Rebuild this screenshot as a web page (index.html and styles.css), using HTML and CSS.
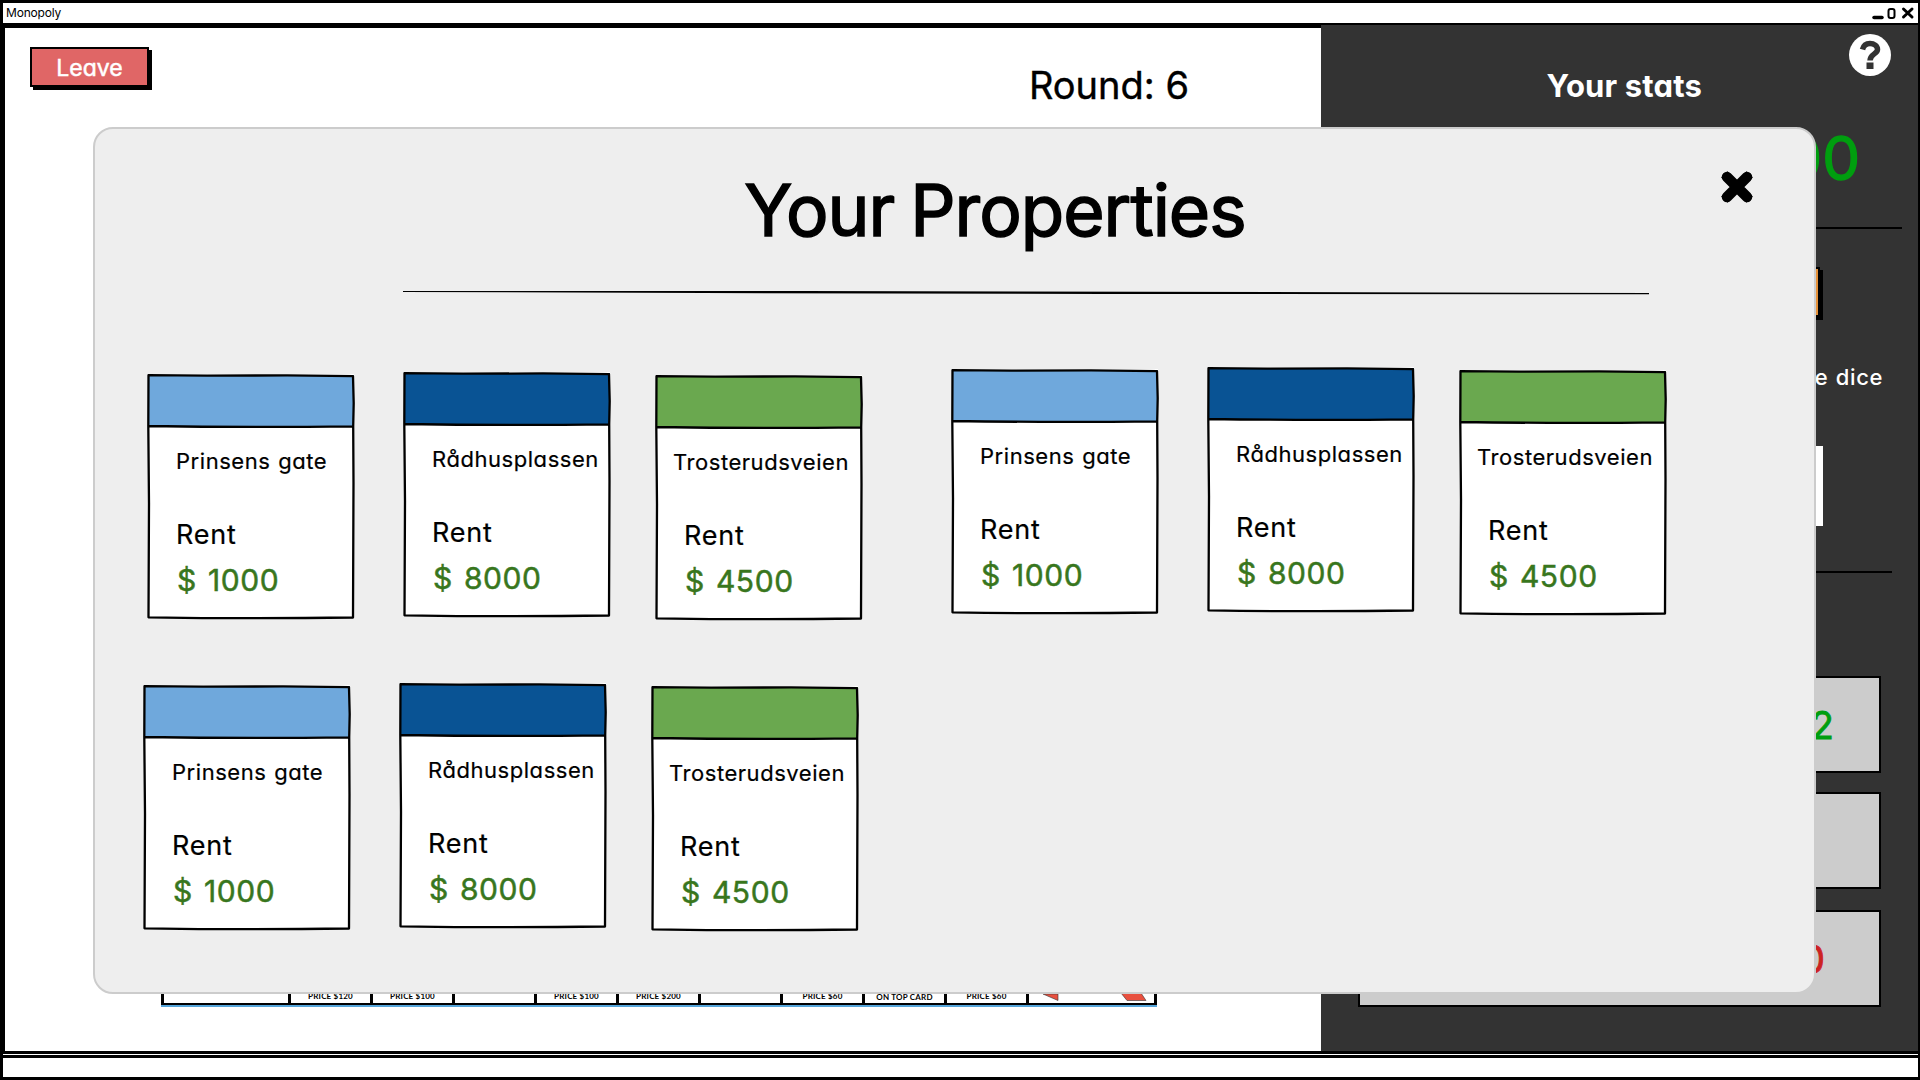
FILE: index.html
```html
<!DOCTYPE html>
<html lang="en">
<head>
<meta charset="utf-8">
<title>Monopoly</title>
<link rel="stylesheet" href="styles.css">
</head>
<body>
<svg class="defs" aria-hidden="true">
  <symbol id="frame" viewBox="0 0 208 248">
    <path d="M1.500 2.200 L60 2.700 L140 2.400 L206 3.200 L206.700 30 L206.200 53 L206.500 110 L206 244.500 Q104 246 1.500 244.300 L2 130 L1.300 53 Z M1.300 53 Q104 54.600 206.300 53.300" fill="none" stroke="#000" stroke-width="2.300" stroke-linejoin="round"/>
  </symbol>
</svg>
<div class="window">
  <header class="titlebar">
    <span class="app-name">Monopoly</span>
    <svg class="controls" width="44" height="14" viewBox="0 0 44 14">
      <path d="M2 11.500H10" stroke="#000" stroke-width="3.500" stroke-linecap="round"/>
      <rect x="16.500" y="3" width="6" height="9" rx="2" fill="none" stroke="#000" stroke-width="2"/>
      <path d="M31.500 3L40 11M40 3L31.500 11" stroke="#000" stroke-width="3" stroke-linecap="round"/>
    </svg>
  </header>
  <main class="main">
    <section class="game">
      <div class="topline">
        <button class="leave">Leave</button>
        <div class="round">Round: 6</div>
      </div>
      <div class="board">
        <div class="cell corner"></div>
        <div class="cell">PRICE $120</div>
        <div class="cell">PRICE $100</div>
        <div class="cell"></div>
        <div class="cell">PRICE $100</div>
        <div class="cell">PRICE $200</div>
        <div class="cell"></div>
        <div class="cell">PRICE $60</div>
        <div class="cell tax">ON TOP CARD</div>
        <div class="cell">PRICE $60</div>
        <div class="cell corner">
          <svg width="124" height="12" viewBox="0 0 124 12"><path d="M14 1L29 1V7.500Z M92 0L112 0L117 7.500H98Z" fill="#e8503f" stroke="#333" stroke-width=".6"/></svg>
        </div>
      </div>
    </section>
    <aside class="stats">
      <svg class="help" width="42" height="42" viewBox="0 0 42 42">
        <circle cx="21" cy="21" r="21" fill="#fff"/>
        <path d="M13.500 15.500C14.500 11.500 17.500 9.500 21 9.500C25 9.500 28.500 12 28.500 15.500C28.500 20 21 20 21 26.500" fill="none" stroke="#333" stroke-width="5.500"/>
        <rect x="17.500" y="28.500" width="7" height="6.500" fill="#333"/>
      </svg>
      <h2>Your stats</h2>
      <div class="cash">00</div>
      <hr class="rule first">
      <div class="roll"></div>
      <div class="dice-label">the dice</div>
      <div class="die"></div>
      <hr class="rule second">
      <div class="tile up">2</div>
      <div class="tile"></div>
      <div class="tile down">0</div>
    </aside>
  </main>
  <footer class="statusbar"></footer>
</div>

<section class="modal">
  <svg class="close" width="34" height="34" viewBox="0 0 34 34"><path d="M7.500 7.500L26.500 26.500M26.500 7.500L7.500 26.500" stroke="#000" stroke-width="9" stroke-linecap="square"/><path d="M7 7L27 27M27 7L7 27" stroke="#000" stroke-width="10.500" stroke-linecap="round"/></svg>
  <h1>Your Properties</h1>
  <svg class="divider" width="1246" height="4" viewBox="0 0 1246 4"><path d="M0 0H400L1246 2V3.200L700 3L300 2L0 1Z"/></svg>
  <div class="groups">
    <div class="group">
      <article class="card sky"><svg class="frame"><use href="#frame"/></svg><div class="band"></div><h3>Prinsens gate</h3><p class="rent">Rent</p><p class="price">$ 1000</p></article>
      <article class="card navy"><svg class="frame"><use href="#frame"/></svg><div class="band"></div><h3>Rådhusplassen</h3><p class="rent">Rent</p><p class="price">$ 8000</p></article>
      <article class="card green"><svg class="frame"><use href="#frame"/></svg><div class="band"></div><h3>Trosterudsveien</h3><p class="rent">Rent</p><p class="price">$ 4500</p></article>
    </div>
    <div class="group">
      <article class="card sky"><svg class="frame"><use href="#frame"/></svg><div class="band"></div><h3>Prinsens gate</h3><p class="rent">Rent</p><p class="price">$ 1000</p></article>
      <article class="card navy"><svg class="frame"><use href="#frame"/></svg><div class="band"></div><h3>Rådhusplassen</h3><p class="rent">Rent</p><p class="price">$ 8000</p></article>
      <article class="card green"><svg class="frame"><use href="#frame"/></svg><div class="band"></div><h3>Trosterudsveien</h3><p class="rent">Rent</p><p class="price">$ 4500</p></article>
    </div>
    <div class="group">
      <article class="card sky"><svg class="frame"><use href="#frame"/></svg><div class="band"></div><h3>Prinsens gate</h3><p class="rent">Rent</p><p class="price">$ 1000</p></article>
      <article class="card navy"><svg class="frame"><use href="#frame"/></svg><div class="band"></div><h3>Rådhusplassen</h3><p class="rent">Rent</p><p class="price">$ 8000</p></article>
      <article class="card green"><svg class="frame"><use href="#frame"/></svg><div class="band"></div><h3>Trosterudsveien</h3><p class="rent">Rent</p><p class="price">$ 4500</p></article>
    </div>
  </div>
</section>
</body>
</html>
```
FILE: styles.css
```css
* { box-sizing: border-box; }
body {
  margin: 0;
  width: 1920px;
  height: 1080px;
  overflow: hidden;
  background: #000;
  color: #000;
  font-family: Inter, "Open Sans", sans-serif;
  font-feature-settings: "cv11", "calt" 0;
}
h1, h2, h3, p { margin: 0; font-weight: 400; }
.defs { position: absolute; width: 0; height: 0; }

.window { display: flex; flex-direction: column; height: 1080px; padding: 3px 2px 3px 3px; }
.titlebar {
  display: flex;
  justify-content: space-between;
  align-items: center;
  height: 20px;
  padding: 0 2px 0 3px;
  background: #fff;
  font-size: 12px;
  line-height: 20px;
  letter-spacing: -.2px;
}
.main {
  display: flex;
  height: 1026px;
  margin: 2px 0 0 2px;
}
.game {
  display: flex;
  flex-direction: column;
  justify-content: space-between;
  width: 1316px;
  height: 1023px;
  margin-top: 3px;
  background: #fff;
}
.topline { display: flex; justify-content: space-between; padding: 19px 132px 0 25px; }
.leave {
  width: 119px;
  height: 40px;
  padding: 1px 0 0;
  border: 2px solid #000;
  background: #e06666;
  box-shadow: 3px 3px 0 #000;
  color: #fff;
  font: inherit;
  font-size: 23px;
  -webkit-text-stroke: .5px #fff;
}
.round { margin-top: 16px; font-size: 38px; line-height: 44px; -webkit-text-stroke: .4px #000; }
.board {
  display: flex;
  width: 996px;
  height: 100px;
  margin: 0 0 46px 156px;
  border-right: 3px solid #000;
  box-shadow: inset 0 -2px #000, 0 2px #55a5da;
}
.cell {
  display: flex;
  flex: 0 0 82px;
  align-items: flex-end;
  justify-content: center;
  border-left: 3px solid #000;
  padding-bottom: 4px;
  font: 700 8px/9px Lato, sans-serif;
  letter-spacing: .2px;
}
.cell.corner { flex-basis: 127px; padding: 0; }
.cell.tax { padding-bottom: 3px; }

.stats {
  position: relative;
  display: flex;
  flex-direction: column;
  align-items: flex-end;
  width: 597px;
  background: #333;
  color: #fff;
}
.help { position: absolute; top: 9px; right: 27px; }
.stats h2 { margin: 39px 216px 0 0; font-size: 31px; line-height: 44px; font-weight: 700; letter-spacing: .15px; }
.cash { margin: 20px 58px 0 0; font-size: 60px; line-height: 60px; color: #009e0f; -webkit-text-stroke: 1.4px #009e0f; }
.rule { width: 500px; height: 2px; margin: 0; border: 0; background: #000; }
.rule.first { margin: 39px 16px 0 0; }
.rule.second { margin: 45px 26px 0 0; }
.roll {
  width: 200px;
  height: 50px;
  margin: 38px 98px 0 0;
  border: 2px solid #000;
  background: #e69138;
  box-shadow: 3px 3px 0 #000;
}
.dice-label { margin: 46px 35px 0 0; font-size: 22px; line-height: 28px; font-weight: 500; letter-spacing: .6px; word-spacing: 1px; }
.die { width: 80px; height: 80px; margin: 55px 95px 0 0; background: #fff; }
.tile {
  width: 523px;
  height: 97px;
  margin: 0 37px 21px 0;
  padding: 1px 45px 0 0;
  border: 2px solid #000;
  background: #ccc;
  font-size: 38px;
  line-height: 92px;
  text-align: right;
}
.up { margin: 103px 37px 19px 0; color: #009e0f; -webkit-text-stroke: .8px #009e0f; }
.down { padding-right: 54px; color: #cc2222; -webkit-text-stroke: .8px #cc2222; }
.statusbar {
  height: 19px;
  margin-top: 7px;
  background: #fff;
  box-shadow: 0 -3px #000, 0 -4px #fff;
}

.modal {
  position: absolute;
  left: 93px;
  top: 127px;
  width: 1723px;
  height: 867px;
  padding-top: 41px;
  border: 2px solid #ccc;
  border-radius: 20px;
  background: #eee;
}
.close { position: absolute; right: 60px; top: 41px; }
.modal h1 {
  padding-left: 81px;
  font-size: 71px;
  line-height: 80px;
  letter-spacing: -1px;
  word-spacing: -3px;
  text-align: center;
  -webkit-text-stroke: 1.5px #000;
}
.divider { display: block; margin: 41px 0 0 308px; }
.groups {
  display: grid;
  grid-template-columns: 804px 714px;
  grid-template-rows: 311px 311px;
  padding: 77px 0 0 53px;
}
.group { display: flex; align-items: flex-start; }
.group:nth-child(2) { margin-top: -5px; }
.group:nth-child(3) { margin-left: -4px; }
.card { position: relative; width: 206px; height: 244px; background: #fff; }
.frame { position: absolute; left: -1px; top: -1px; width: 208px; height: 248px; }
.band { height: 52px; margin-top: 1px; }
.card h3 {
  margin: 21px 0 0 28px;
  font-size: 22px;
  line-height: 26px;
  letter-spacing: .55px;
  white-space: nowrap;
}
.card h3, .rent { -webkit-text-stroke: .2px #000; }
.rent { margin: 44px 0 0 28px; font-size: 27px; line-height: 33px; letter-spacing: .8px; }
.price {
  margin: 11px 0 0 29px;
  font-size: 30px;
  line-height: 37px;
  letter-spacing: .6px;
  word-spacing: 2px;
  color: #38761d;
  -webkit-text-stroke: .5px #38761d;
}
.card { display: flow-root; }
.sky { margin-top: 2px; }
.sky .band { background: #6fa8dc; }
.sky h3 { word-spacing: 1px; }
.navy { margin-left: 50px; }
.navy .band { background: #095394; }
.green { margin: 3px 0 0 46px; }
.green .band { background: #6aa84f; }
.green h3 { margin-left: 17px; }
```
